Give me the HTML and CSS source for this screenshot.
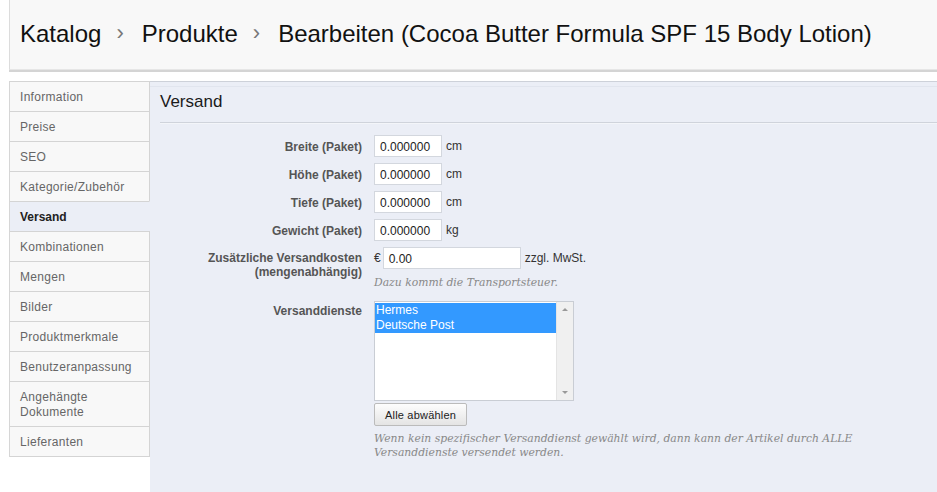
FILE: index.html
```html
<!DOCTYPE html>
<html lang="de">
<head>
<meta charset="utf-8">
<title>Bearbeiten</title>
<link rel="stylesheet" href="styles.css">
</head>
<body>
<header class="toolbar">
  <h1 class="crumbs">
    <span>Katalog</span><span class="sep">&#8250;</span><span>Produkte</span><span class="sep">&#8250;</span><span>Bearbeiten (Cocoa Butter Formula SPF 15 Body Lotion)</span>
  </h1>
</header>
<div class="main">
  <nav class="tabs">
    <a class="tab">Information</a>
    <a class="tab">Preise</a>
    <a class="tab">SEO</a>
    <a class="tab">Kategorie/Zubehör</a>
    <a class="tab active">Versand</a>
    <a class="tab">Kombinationen</a>
    <a class="tab">Mengen</a>
    <a class="tab">Bilder</a>
    <a class="tab">Produktmerkmale</a>
    <a class="tab">Benutzeranpassung</a>
    <a class="tab">Angehängte<br>Dokumente</a>
    <a class="tab">Lieferanten</a>
  </nav>
  <section class="panel">
    <h2 class="panel-title">Versand</h2>
    <div class="form">
      <div class="row">
        <label class="lbl">Breite (Paket)</label>
        <div class="field"><span class="inp small">0.000000</span><span class="unit">cm</span></div>
      </div>
      <div class="row">
        <label class="lbl">Höhe (Paket)</label>
        <div class="field"><span class="inp small">0.000000</span><span class="unit">cm</span></div>
      </div>
      <div class="row">
        <label class="lbl">Tiefe (Paket)</label>
        <div class="field"><span class="inp small">0.000000</span><span class="unit">cm</span></div>
      </div>
      <div class="row">
        <label class="lbl">Gewicht (Paket)</label>
        <div class="field"><span class="inp small">0.000000</span><span class="unit">kg</span></div>
      </div>
      <div class="row cost">
        <label class="lbl">Zusätzliche Versandkosten<br>(mengenabhängig)</label>
        <div class="col">
          <div class="field"><span class="cur">€</span><span class="inp wide">0.00</span><span class="unit">zzgl. MwSt.</span></div>
          <p class="help">Dazu kommt die Transportsteuer.</p>
        </div>
      </div>
      <div class="row carriers">
        <label class="lbl">Versanddienste</label>
        <div class="col">
          <div class="listbox">
            <div class="options">
              <div class="opt sel">Hermes</div>
              <div class="opt sel">Deutsche Post</div>
            </div>
            <div class="scrollbar"><span class="arr up"></span><span class="arr down"></span></div>
          </div>
          <button class="btn" type="button">Alle abwählen</button>
          <p class="help">Wenn kein spezifischer Versanddienst gewählt wird, dann kann der Artikel durch ALLE<br>Versanddienste versendet werden.</p>
        </div>
      </div>
    </div>
  </section>
</div>
</body>
</html>
```

FILE: styles.css
```css
html, body {
  margin: 0;
  padding: 0;
  background: #ffffff;
  font-family: "Liberation Sans", Arial, sans-serif;
  height: 100%;
  overflow: hidden;
}

.toolbar {
  margin-left: 9px;
  height: 69px;
  background: #f8f8f8;
  border-left: 1px solid #dcdcdc;
  border-bottom: 1px solid #e6e6e6;
  box-shadow: 0 2px 0 #d4d4d4;
  display: flex;
  align-items: center;
  padding-left: 10px;
}

.crumbs {
  margin: 0;
  font-weight: normal;
  font-size: 24px;
  color: #111;
  display: flex;
  align-items: center;
  white-space: nowrap;
  padding-bottom: 1px;
}

.crumbs .sep {
  color: #777;
  font-size: 22px;
  margin: 0 18px 0 15px;
  position: relative;
  top: -1px;
}

.main {
  display: flex;
  margin-top: 11px;
  margin-left: 9px;
  height: 420px;
}

.tabs {
  width: 140px;
  display: flex;
  flex-direction: column;
  align-self: flex-start;
  border-left: 1px solid #d6d6d6;
}

.tab {
  display: block;
  background: #f8f8f8;
  color: #666;
  font-size: 12px;
  line-height: 15px;
  padding: 8px 10px 6px 10px;
  border-top: 1px solid #d4d4d4;
  border-right: 1px solid #d4d4d4;
  letter-spacing: 0.3px;
}

.tab:last-child {
  border-bottom: 1px solid #d4d4d4;
}

.tab.active {
  background: #ebeef6;
  color: #222;
  font-weight: bold;
  border-right-color: #ebeef6;
  letter-spacing: 0;
}

.panel {
  flex: 1;
  background: #ebeef6;
  border-top: 1px solid #cdd1d9;
  box-shadow: inset 0 4px 0 #ebeef6, inset 0 5px 0 #e1e5ee;
  padding: 0 0 0 10px;
}

.panel-title {
  margin: 0;
  font-weight: normal;
  font-size: 17px;
  color: #1a1a1a;
  padding: 9px 0 10px 0;
  line-height: 21px;
  border-bottom: 1px solid #cfd3db;
  box-shadow: 0 1px 0 #f3f5f9;
}

.form {
  padding-top: 12px;
  display: flex;
  flex-direction: column;
}

.row {
  display: flex;
  align-items: flex-start;
  margin-bottom: 6px;
}

.lbl {
  width: 202px;
  text-align: right;
  font-size: 12px;
  font-weight: bold;
  color: #555;
  line-height: 14px;
  padding-top: 5px;
}

.field {
  display: flex;
  align-items: center;
  margin-left: 12px;
  height: 22px;
}

.col {
  display: flex;
  flex-direction: column;
  align-items: flex-start;
}

.col .field {
  margin-left: 12px;
}

.inp {
  display: block;
  box-sizing: border-box;
  height: 22px;
  background: #fff;
  border: 1px solid #d3d7de;
  font-size: 12px;
  color: #222;
  padding: 5px 5px 3px;
  line-height: 12px;
}

.inp.small { width: 68px; }
.inp.wide { width: 138px; margin-left: 2px; }

.unit {
  font-size: 12px;
  color: #333;
  margin-left: 4px;
}

.cur {
  font-size: 12px;
  color: #333;
}

.cost .lbl { padding-top: 4px; }
.cost { margin-bottom: 11px; }

.help {
  margin: 7px 0 0 12px;
  font-family: "DejaVu Serif", Georgia, serif;
  font-style: italic;
  font-size: 10.8px;
  line-height: 14px;
  color: #888;
}

.carriers .lbl { padding-top: 3px; }

.listbox {
  margin-left: 12px;
  width: 200px;
  height: 100px;
  box-sizing: border-box;
  background: #fff;
  border: 1px solid #c9cdd4;
  display: flex;
}

.options {
  flex: 1;
  padding-top: 1px;
}

.opt {
  font-size: 12px;
  line-height: 15px;
  color: #fff;
  padding-left: 1px;
}

.opt.sel { background: #3399ff; }

.scrollbar {
  width: 16px;
  background: #f0f0f0;
  border-left: 1px solid #e4e4e4;
  display: flex;
  flex-direction: column;
  justify-content: space-between;
  align-items: center;
  padding: 6px 0 6px;
}

.arr {
  width: 0;
  height: 0;
  border-left: 3px solid transparent;
  border-right: 3px solid transparent;
}

.arr.up { border-bottom: 3px solid #999; }
.arr.down { border-top: 3px solid #999; }

.btn {
  margin: 2px 0 0 12px;
  width: 93px;
  height: 23px;
  font-family: "Liberation Sans", Arial, sans-serif;
  font-size: 11px;
  color: #222;
  border: 1px solid #bbb;
  border-radius: 2px;
  background: linear-gradient(#fdfdfd, #e4e4e4);
  padding: 0;
  letter-spacing: 0.2px;
}

.carriers .help { margin-top: 6px; }
```
